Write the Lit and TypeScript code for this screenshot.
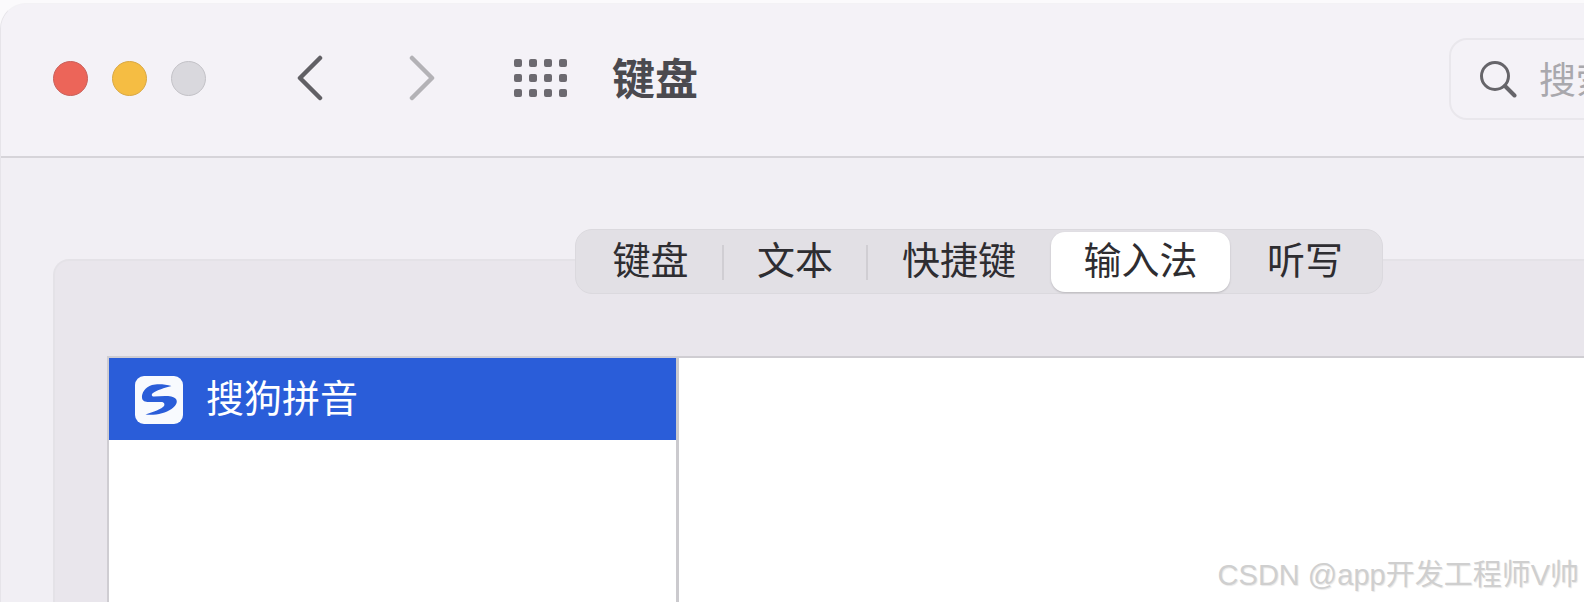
import { LitElement, html, css } from "lit";
import { customElement } from "lit/decorators.js";

@customElement("app-root")
export class AppRoot extends LitElement {
  static styles = css`
    :host { display: block; width: 1584px; height: 602px; overflow: hidden; position: relative; background: #fbfafc; font-family: "Noto Sans CJK SC", "Liberation Sans", sans-serif; }
  `;
  render() {
    return html`<mac-window></mac-window>`;
  }
}

@customElement("mac-window")
export class MacWindow extends LitElement {
  static styles = css`
    :host { display: block; height: 602px; box-sizing: border-box; padding-top: 3px; font-family: "Noto Sans CJK SC", "Liberation Sans", sans-serif; }
    .win { height: 599px; background: #f1eff4; border-top-left-radius: 26px; border-left: 1px solid #e6e4e9; border-top: 1px solid #f3f2f5; box-sizing: border-box; overflow: hidden; }
    .toolbar { height: 148px; padding-bottom: 4px; background: #f4f2f7; border-bottom: 2px solid #d6d4d9; display: flex; align-items: center; box-sizing: content-box; }
    .lights { display: flex; gap: 24px; margin-left: 52px; }
    .light { width: 35px; height: 35px; border-radius: 50%; box-sizing: border-box; }
    .red { background: #ec6559; border: 1px solid #c9605a; }
    .yellow { background: #f5bd43; border: 1px solid #d9a843; }
    .gray { background: #d9d8dd; border: 1px solid #c3c2c7; }
    .back { margin-left: 88px; display: block; }
    .forward { margin-left: 84px; display: block; }
    .grid { margin-left: 76px; display: grid; grid-template-columns: repeat(4, 8px); grid-auto-rows: 8px; column-gap: 7px; row-gap: 7px; }
    .grid i { background: #6c6a70; border-radius: 2px; }
    .title { margin-left: 45px; padding-bottom: 4px; font-size: 43px; font-weight: 700; color: #4b4a4f; line-height: 60px; white-space: nowrap; }
    .search { margin-left: auto; width: 200px; margin-right: -65px; margin-top: 2px; height: 82px; box-sizing: border-box; border: 2px solid #e9e7ec; border-radius: 18px; display: flex; align-items: center; padding-left: 28px; flex: none; }
    .search svg { display: block; flex: none; }
    .search span { margin-left: 22px; padding-bottom: 3px; font-size: 37px; color: #a9a8ad; white-space: nowrap; }
    .tabs { position: relative; z-index: 1; margin: 71px 0 0 574px; width: 808px; height: 65px; box-sizing: border-box; background: #e2e0e5; border: 1px solid #dbd9de; border-radius: 17px; padding: 2px 2px; display: flex; }
    .tab { font-size: 38px; font-weight: 400; color: #2e2d31; display: flex; align-items: center; justify-content: center; line-height: 1; flex: none; box-sizing: border-box; position: relative; height: 60px; padding-bottom: 9px; }
    .sep::after { content: ""; width: 2px; height: 35px; background: #d0ced3; position: absolute; right: -1px; top: 13px; }
    .active { background: #fff; border-radius: 14px; box-shadow: 0 1px 2px #b9b7bc; }
    .panel { margin: -35px 0 0 52px; height: 400px; background: #e9e6ec; border: 2px solid #e4e2e7; border-right: 0; border-bottom: 0; border-top-left-radius: 16px; box-sizing: border-box; padding: 95px 0 0 52px; }
    .box { height: 310px; border-top: 2px solid #cfcdd2; border-left: 2px solid #cfcdd2; background: #fff; display: flex; }
    .list { width: 567px; flex: none; }
    .row { height: 82px; background: #2a5dd9; display: flex; align-items: center; color: #fff; font-size: 38px; }
    .logo { display: block; margin: 1px 0 0 26px; flex: none; }
    .row span { margin-left: 23px; padding-bottom: 6px; font-weight: 400; white-space: nowrap; line-height: 1; }
    .right { flex: 1; border-left: 3px solid #cbcace; background: #fff; }
    .mark { position: absolute; right: 5px; top: 556px; font-family: "Liberation Sans", "Noto Sans CJK SC", sans-serif; font-size: 29px; line-height: 38px; color: #cfcfcf; text-shadow: 1px 1px 1px #e8e8e8; white-space: nowrap; z-index: 2; }
  `;
  render() {
    return html`
      <div class="win">
        <div class="toolbar">
          <div class="lights">
            <div class="light red"></div><div class="light yellow"></div><div class="light gray"></div>
          </div>
          <svg class="back" width="30" height="46" viewBox="0 0 30 46"><path d="M26 3 L6 23 L26 43" fill="none" stroke="#616065" stroke-width="4.5" stroke-linecap="round" stroke-linejoin="round"/></svg>
          <svg class="forward" width="30" height="46" viewBox="0 0 30 46"><path d="M4 3 L24 23 L4 43" fill="none" stroke="#b3b2b6" stroke-width="4.5" stroke-linecap="round" stroke-linejoin="round"/></svg>
          <div class="grid">${Array.from({ length: 12 }, () => html`<i></i>`)}</div>
          <div class="title">键盘</div>
          <div class="search">
            <svg width="38" height="38" viewBox="0 0 38 38"><circle cx="16" cy="16" r="13.5" fill="none" stroke="#66656a" stroke-width="3"/><path d="M26 26 L35.5 35.5" stroke="#66656a" stroke-width="4" stroke-linecap="round"/></svg>
            <span>搜索</span>
          </div>
        </div>
        <div class="tabs">
          <div class="tab sep" style="width:145px">键盘</div>
          <div class="tab sep" style="width:144px">文本</div>
          <div class="tab" style="width:184px">快捷键</div>
          <div class="tab active" style="width:179px">输入法</div>
          <div class="tab" style="width:150px">听写</div>
        </div>
        <div class="panel">
          <div class="box">
            <div class="list">
              <div class="row">
                <svg class="logo" width="48" height="48" viewBox="0 0 48 48">
                  <rect width="48" height="48" rx="9" fill="#f8fafe"/>
                  <path d="M36.5 10 C30 8 22 7.5 17 9 C10 11 6.5 17 7 22 C7.5 25 10 26 14 26 L26 26 C29 26 30 28 29 30 C27 33 18 36 10.5 38.5 C20 39.5 30 37.5 36.5 33 C41 30 43 26 41 23 C39 20.5 34 20 30 20 L19 20.5 C16.5 20.5 16 18.5 18 17 C22 14 29 12 36.5 10 Z" fill="#2a5dd9"/>
                </svg>
                <span>搜狗拼音</span>
              </div>
            </div>
            <div class="right"></div>
          </div>
        </div>
      </div>
      <div class="mark">CSDN @app开发工程师V帅</div>
    `;
  }
}
